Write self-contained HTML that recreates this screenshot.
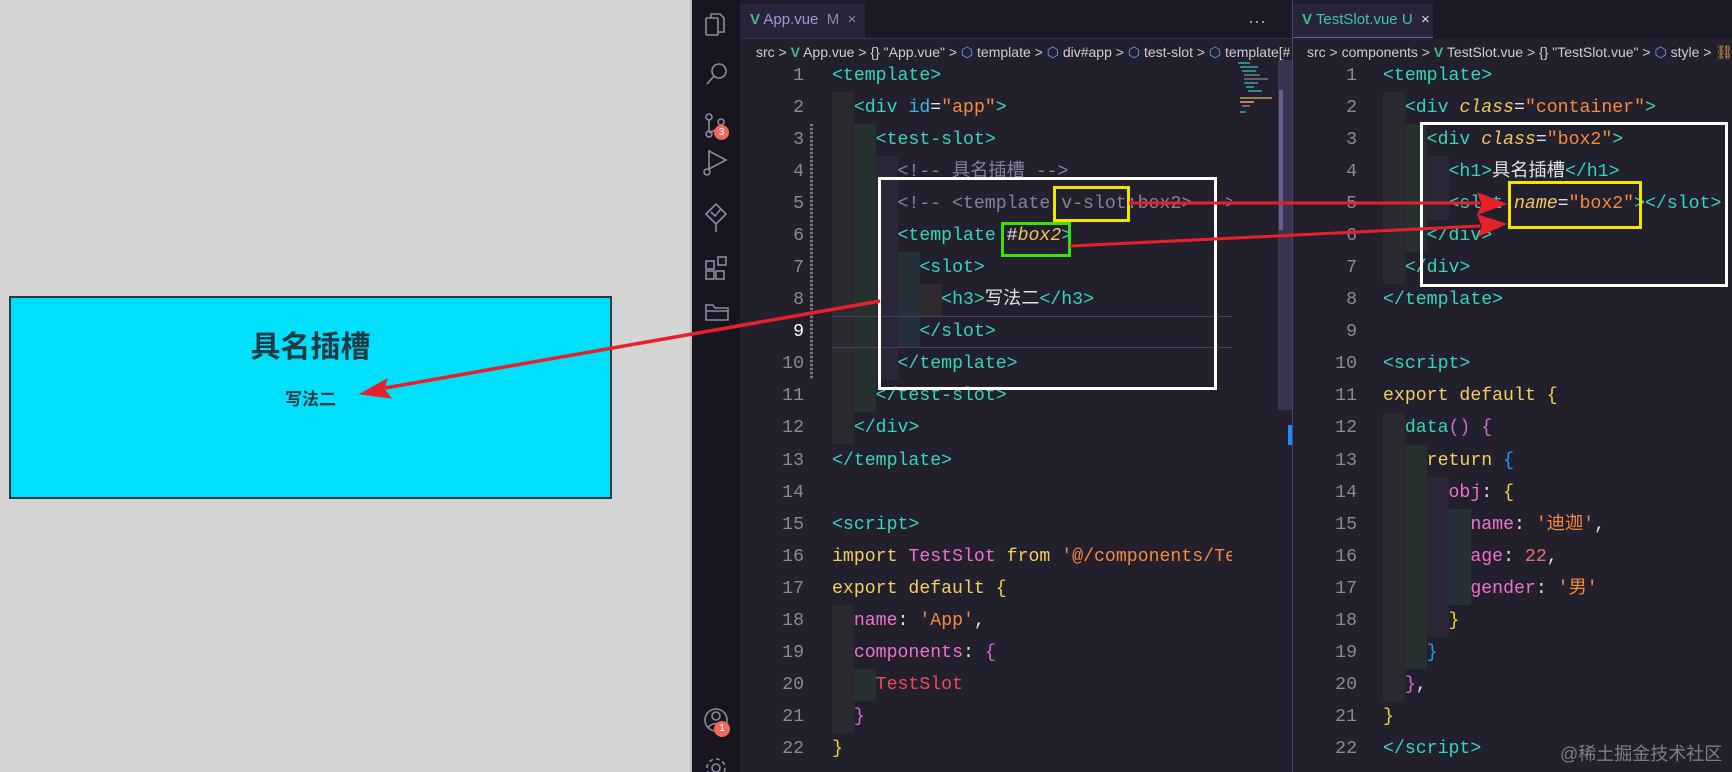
<!DOCTYPE html>
<html><head><meta charset="utf-8">
<style>
*{margin:0;padding:0;box-sizing:border-box}
body{width:1732px;height:772px;overflow:hidden;background:#d4d4d4;position:relative;font-family:"Liberation Sans","Noto Sans CJK SC",sans-serif}
.abs{position:absolute}
#cyan{left:9px;top:296px;width:603px;height:203px;background:#00e0fc;border:2px solid #2c3a40}
.ed{background:#23202e}
.ln{position:absolute;height:32px;line-height:32px;font-family:"Liberation Mono","Noto Sans CJK SC",monospace;font-size:18.2px;white-space:pre;color:#e2e0ea}
.num{text-align:right;width:60px;color:#8c8898}
.t{color:#35d6b8}.a{color:#3cb6ee}.s{color:#f68a3c}.c{color:#86819a}.k{color:#f4cf5e}.p{color:#ee72c8}.r{color:#f0485a}.y{color:#f7d038}.m{color:#d667d6}.b{color:#1e9dff}.i{color:#f2c85a;font-style:italic}
.crumb{font-size:14px;color:#cfcbd8;top:40px;height:24px;line-height:24px;white-space:pre}
</style></head><body>
<div id="cyan" class="abs"></div>
<div class="abs" style="left:9px;top:322px;width:603px;text-align:center;font-size:30px;font-weight:bold;color:#1f3a44">具名插槽</div>
<div class="abs" style="left:9px;top:385px;width:603px;text-align:center;font-size:17px;font-weight:bold;color:#1f3a44">写法二</div>

<div class="abs" style="left:690px;top:0;width:2px;height:772px;background:#bdbdbd"></div>
<div class="abs" style="left:692px;top:0;width:48px;height:772px;background:#181520"></div>
<div class="abs ed" style="left:740px;top:0;width:992px;height:772px"></div>
<div class="abs" style="left:740px;top:0;width:992px;height:38px;background:#1d1a27"></div>
<div class="abs" style="left:740px;top:4px;width:125px;height:34px;background:#28243a"></div>
<div class="abs" style="left:1293px;top:4px;width:140px;height:34px;background:#28243a;border-bottom:1px solid #7a4fb0"></div>
<div class="abs" style="left:740px;top:38px;width:553px;height:1px;background:#3a2f55"></div>
<div class="abs" style="left:1292px;top:0;width:1px;height:772px;background:#4a4370"></div>

<svg class="abs" style="left:692px;top:0" width="48" height="772" fill="none" stroke="#8d89a0" stroke-width="1.6">
<rect x="14" y="18" width="12" height="17" rx="1"/><path d="M19 18v-4h9l4 4v14h-6"/>
<circle cx="27" cy="71" r="7"/><path d="M22 76l-7 8"/>
<circle cx="17" cy="117" r="3"/><circle cx="17" cy="134" r="3"/><circle cx="29" cy="122" r="3"/><path d="M17 120v11M29 125c0 5-8 5-12 8"/>
<path d="M17 151l17 9-17 9z"/><circle cx="15" cy="172" r="3"/>
<path d="M24 204l10 10-10 10-10-10zM24 224v8M19 212l4 4 6-7"/>
<rect x="14" y="261" width="8" height="8"/><rect x="14" y="271" width="8" height="8"/><rect x="24" y="271" width="8" height="8"/><rect x="26" y="257" width="8" height="8"/>
<path d="M14 305h7l2 3h13v12H14zM14 311h22"/>
<circle cx="24" cy="720" r="11"/><circle cx="24" cy="716" r="4"/><path d="M16 728c4-6 12-6 16 0"/>
<circle cx="24" cy="768" r="4"/><circle cx="24" cy="768" r="9" stroke-dasharray="4 3"/>
</svg>
<div class="abs" style="left:714px;top:125px;width:15px;height:15px;border-radius:50%;background:#f06a5e;color:#fff;font-size:10px;text-align:center;line-height:15px">3</div>
<div class="abs" style="left:714px;top:721px;width:16px;height:16px;border-radius:50%;background:#f06a5e;color:#fff;font-size:10px;text-align:center;line-height:16px">1</div>

<div class="abs" style="left:750px;top:11px;font-size:15px;color:#b8b4c8;white-space:pre"><span style="color:#3dbd8a;font-weight:bold">V</span> <span style="color:#a595d8">App.vue</span>  <span style="color:#8a86a0">M  ×</span></div>
<div class="abs" style="left:1248px;top:11px;font-size:18px;color:#aaa">···</div>
<div class="abs" style="left:1302px;top:11px;font-size:15px;white-space:pre"><span style="color:#3dbd8a;font-weight:bold">V</span> <span style="color:#3dc7a0">TestSlot.vue</span> <span style="color:#3dc7a0">U</span>  <span style="color:#ddd">×</span></div>
<div class="abs crumb" style="left:756px;width:534px;overflow:hidden">src &gt; <span style="color:#3dbd8a;font-weight:bold">V</span> App.vue &gt; {} "App.vue" &gt; <span style="color:#6aa0ff">⬡</span> template &gt; <span style="color:#6aa0ff">⬡</span> div#app &gt; <span style="color:#6aa0ff">⬡</span> test-slot &gt; <span style="color:#6aa0ff">⬡</span> template[#</div>
<div class="abs crumb" style="left:1307px;width:425px;overflow:hidden">src &gt; components &gt; <span style="color:#3dbd8a;font-weight:bold">V</span> TestSlot.vue &gt; {} "TestSlot.vue" &gt; <span style="color:#6aa0ff">⬡</span> style &gt; <span style="color:#e8a040">⛓</span> .c</div>

<div class="abs" style="left:832px;top:92px;width:22px;height:352px;background:#2b2a30"></div>
<div class="abs" style="left:854px;top:124px;width:22px;height:288px;background:#26302f"></div>
<div class="abs" style="left:876px;top:156px;width:22px;height:224px;background:#2b2638"></div>
<div class="abs" style="left:898px;top:252px;width:22px;height:96px;background:#253038"></div>
<div class="abs" style="left:920px;top:284px;width:22px;height:32px;background:#302a2e"></div>
<div class="abs" style="left:832px;top:605px;width:22px;height:128px;background:#2b2a30"></div>
<div class="abs" style="left:854px;top:669px;width:22px;height:32px;background:#26302f"></div>
<div class="abs" style="left:832px;top:316px;width:400px;height:32px;border-top:1px solid #4a4068;border-bottom:1px solid #4a4068"></div>
<div class="abs" style="left:810px;top:124px;width:3px;height:256px;background:repeating-linear-gradient(#777 0 2px,#333 2px 4px)"></div>
<!-- minimap -->
<svg class="abs" style="left:1236px;top:60px" width="40" height="60" stroke-width="1.5">
<line x1="2" y1="3" x2="14" y2="3" stroke="#3aa"/><line x1="4" y1="7" x2="22" y2="7" stroke="#3aa"/>
<line x1="6" y1="11" x2="20" y2="11" stroke="#3aa"/><line x1="8" y1="15" x2="24" y2="15" stroke="#777"/>
<line x1="8" y1="19" x2="32" y2="19" stroke="#777"/><line x1="8" y1="23" x2="22" y2="23" stroke="#3aa"/>
<line x1="10" y1="27" x2="18" y2="27" stroke="#3aa"/><line x1="12" y1="31" x2="26" y2="31" stroke="#3aa"/>
<line x1="4" y1="38" x2="36" y2="38" stroke="#c96"/><line x1="4" y1="42" x2="18" y2="42" stroke="#cb5"/>
<line x1="6" y1="46" x2="14" y2="46" stroke="#c5a"/><line x1="4" y1="52" x2="10" y2="52" stroke="#3aa"/>
</svg>
<div class="abs" style="left:1278px;top:60px;width:14px;height:350px;background:#3a3450"></div>
<div class="abs" style="left:1279px;top:90px;width:4px;height:140px;background:#6a5e90"></div>
<div class="abs" style="left:1288px;top:425px;width:4px;height:20px;background:#1e8cff"></div>

<div class="ln num" style="left:744px;top:60px">1</div>
<div class="ln num" style="left:744px;top:92px">2</div>
<div class="ln num" style="left:744px;top:124px">3</div>
<div class="ln num" style="left:744px;top:156px">4</div>
<div class="ln num" style="left:744px;top:188px">5</div>
<div class="ln num" style="left:744px;top:220px">6</div>
<div class="ln num" style="left:744px;top:252px">7</div>
<div class="ln num" style="left:744px;top:284px">8</div>
<div class="ln num" style="left:744px;top:316px;color:#fff">9</div>
<div class="ln num" style="left:744px;top:348px">10</div>
<div class="ln num" style="left:744px;top:380px">11</div>
<div class="ln num" style="left:744px;top:412px">12</div>
<div class="ln num" style="left:744px;top:445px">13</div>
<div class="ln num" style="left:744px;top:477px">14</div>
<div class="ln num" style="left:744px;top:509px">15</div>
<div class="ln num" style="left:744px;top:541px">16</div>
<div class="ln num" style="left:744px;top:573px">17</div>
<div class="ln num" style="left:744px;top:605px">18</div>
<div class="ln num" style="left:744px;top:637px">19</div>
<div class="ln num" style="left:744px;top:669px">20</div>
<div class="ln num" style="left:744px;top:701px">21</div>
<div class="ln num" style="left:744px;top:733px">22</div>

<div class="abs" style="left:832px;top:0;width:400px;height:772px;overflow:hidden">
<div class="ln" style="left:0;top:60px"><span class="t">&lt;template&gt;</span></div>
<div class="ln" style="left:0;top:92px">  <span class="t">&lt;div</span> <span class="a">id</span>=<span class="s">"app"</span><span class="t">&gt;</span></div>
<div class="ln" style="left:0;top:124px">    <span class="t">&lt;test-slot&gt;</span></div>
<div class="ln c" style="left:0;top:156px">      &lt;!-- 具名插槽 --&gt;</div>
<div class="ln c" style="left:0;top:188px">      &lt;!-- &lt;template v-slot:box2&gt; --&gt;</div>
<div class="ln" style="left:0;top:220px">      <span class="t">&lt;template</span> #<span class="i">box2</span><span class="t">&gt;</span></div>
<div class="ln" style="left:0;top:252px">        <span class="t">&lt;slot&gt;</span></div>
<div class="ln" style="left:0;top:284px">          <span class="t">&lt;h3&gt;</span>写法二<span class="t">&lt;/h3&gt;</span></div>
<div class="ln" style="left:0;top:316px">        <span class="t">&lt;/slot&gt;</span></div>
<div class="ln" style="left:0;top:348px">      <span class="t">&lt;/template&gt;</span></div>
<div class="ln" style="left:0;top:380px">    <span class="t">&lt;/test-slot&gt;</span></div>
<div class="ln" style="left:0;top:412px">  <span class="t">&lt;/div&gt;</span></div>
<div class="ln" style="left:0;top:445px"><span class="t">&lt;/template&gt;</span></div>
<div class="ln" style="left:0;top:509px"><span class="t">&lt;script&gt;</span></div>
<div class="ln" style="left:0;top:541px"><span class="k">import</span> <span class="p">TestSlot</span> <span class="k">from</span> <span class="s">'@/components/TestSlot.vue'</span></div>
<div class="ln" style="left:0;top:573px"><span class="k">export default</span> <span class="y">{</span></div>
<div class="ln" style="left:0;top:605px">  <span class="p">name</span>: <span class="s">'App'</span>,</div>
<div class="ln" style="left:0;top:637px">  <span class="p">components</span>: <span class="m">{</span></div>
<div class="ln" style="left:0;top:669px">    <span class="r">TestSlot</span></div>
<div class="ln" style="left:0;top:701px">  <span class="m">}</span></div>
<div class="ln" style="left:0;top:733px"><span class="y">}</span></div>
</div>

<div class="abs" style="left:1383px;top:92px;width:22px;height:192px;background:#2b2a30"></div>
<div class="abs" style="left:1405px;top:124px;width:22px;height:128px;background:#26302f"></div>
<div class="abs" style="left:1427px;top:156px;width:22px;height:64px;background:#2b2638"></div>
<div class="abs" style="left:1383px;top:413px;width:22px;height:288px;background:#2b2a30"></div>
<div class="abs" style="left:1405px;top:445px;width:22px;height:224px;background:#26302f"></div>
<div class="abs" style="left:1427px;top:477px;width:22px;height:160px;background:#2b2638"></div>
<div class="abs" style="left:1449px;top:509px;width:22px;height:96px;background:#253038"></div>

<div class="ln num" style="left:1297px;top:60px">1</div>
<div class="ln num" style="left:1297px;top:92px">2</div>
<div class="ln num" style="left:1297px;top:124px">3</div>
<div class="ln num" style="left:1297px;top:156px">4</div>
<div class="ln num" style="left:1297px;top:188px">5</div>
<div class="ln num" style="left:1297px;top:220px">6</div>
<div class="ln num" style="left:1297px;top:252px">7</div>
<div class="ln num" style="left:1297px;top:284px">8</div>
<div class="ln num" style="left:1297px;top:316px">9</div>
<div class="ln num" style="left:1297px;top:348px">10</div>
<div class="ln num" style="left:1297px;top:380px">11</div>
<div class="ln num" style="left:1297px;top:412px">12</div>
<div class="ln num" style="left:1297px;top:445px">13</div>
<div class="ln num" style="left:1297px;top:477px">14</div>
<div class="ln num" style="left:1297px;top:509px">15</div>
<div class="ln num" style="left:1297px;top:541px">16</div>
<div class="ln num" style="left:1297px;top:573px">17</div>
<div class="ln num" style="left:1297px;top:605px">18</div>
<div class="ln num" style="left:1297px;top:637px">19</div>
<div class="ln num" style="left:1297px;top:669px">20</div>
<div class="ln num" style="left:1297px;top:701px">21</div>
<div class="ln num" style="left:1297px;top:733px">22</div>

<div class="abs" style="left:1383px;top:0;width:349px;height:772px;overflow:hidden">
<div class="ln" style="left:0;top:60px"><span class="t">&lt;template&gt;</span></div>
<div class="ln" style="left:0;top:92px">  <span class="t">&lt;div</span> <span class="i">class</span>=<span class="s">"container"</span><span class="t">&gt;</span></div>
<div class="ln" style="left:0;top:124px">    <span class="t">&lt;div</span> <span class="i">class</span>=<span class="s">"box2"</span><span class="t">&gt;</span></div>
<div class="ln" style="left:0;top:156px">      <span class="t">&lt;h1&gt;</span>具名插槽<span class="t">&lt;/h1&gt;</span></div>
<div class="ln" style="left:0;top:188px">      <span class="t">&lt;slot</span> <span class="i">name</span>=<span class="s">"box2"</span><span class="t">&gt;&lt;/slot&gt;</span></div>
<div class="ln" style="left:0;top:220px">    <span class="t">&lt;/div&gt;</span></div>
<div class="ln" style="left:0;top:252px">  <span class="t">&lt;/div&gt;</span></div>
<div class="ln" style="left:0;top:284px"><span class="t">&lt;/template&gt;</span></div>
<div class="ln" style="left:0;top:348px"><span class="t">&lt;script&gt;</span></div>
<div class="ln" style="left:0;top:380px"><span class="k">export default</span> <span class="y">{</span></div>
<div class="ln" style="left:0;top:412px">  <span class="t">data</span><span class="m">()</span> <span class="m">{</span></div>
<div class="ln" style="left:0;top:445px">    <span class="k">return</span> <span class="b">{</span></div>
<div class="ln" style="left:0;top:477px">      <span class="p">obj</span>: <span class="y">{</span></div>
<div class="ln" style="left:0;top:509px">        <span class="p">name</span>: <span class="s">'迪迦'</span>,</div>
<div class="ln" style="left:0;top:541px">        <span class="p">age</span>: <span class="s" style="color:#f26a6a">22</span>,</div>
<div class="ln" style="left:0;top:573px">        <span class="p">gender</span>: <span class="s">'男'</span></div>
<div class="ln" style="left:0;top:605px">      <span class="y">}</span></div>
<div class="ln" style="left:0;top:637px">    <span class="b">}</span></div>
<div class="ln" style="left:0;top:669px">  <span class="m">}</span>,</div>
<div class="ln" style="left:0;top:701px"><span class="y">}</span></div>
<div class="ln" style="left:0;top:733px"><span class="t">&lt;/script&gt;</span></div>
</div>
<div class="abs" style="left:1560px;top:740px;font-size:18px;color:rgba(200,200,210,.55);white-space:pre">@稀土掘金技术社区</div>

<div class="abs" style="left:878px;top:177px;width:339px;height:213px;border:3px solid #fff"></div>
<div class="abs" style="left:1053px;top:186px;width:77px;height:36px;border:3px solid #f2e600"></div>
<div class="abs" style="left:1001px;top:222px;width:70px;height:35px;border:3px solid #3ee000"></div>
<div class="abs" style="left:1420px;top:122px;width:308px;height:165px;border:3px solid #fff"></div>
<div class="abs" style="left:1508px;top:181px;width:134px;height:48px;border:3px solid #f2e600"></div>

<svg class="abs" style="left:0;top:0" width="1732" height="772">
<g stroke="#e8202a" fill="#e8202a">
<line x1="1129" y1="203" x2="1480" y2="203" stroke-width="3"/>
<polygon points="1506,204 1478,193 1482,204 1478,214" />
<line x1="1070" y1="246" x2="1480" y2="226" stroke-width="3"/>
<polygon points="1506,224 1478,215 1482,226 1479,236"/>
<line x1="880" y1="301" x2="385" y2="388" stroke-width="3.5"/>
<polygon points="360,394 387,379 384,389 391,398"/>
</g>
</svg>
</body></html>
